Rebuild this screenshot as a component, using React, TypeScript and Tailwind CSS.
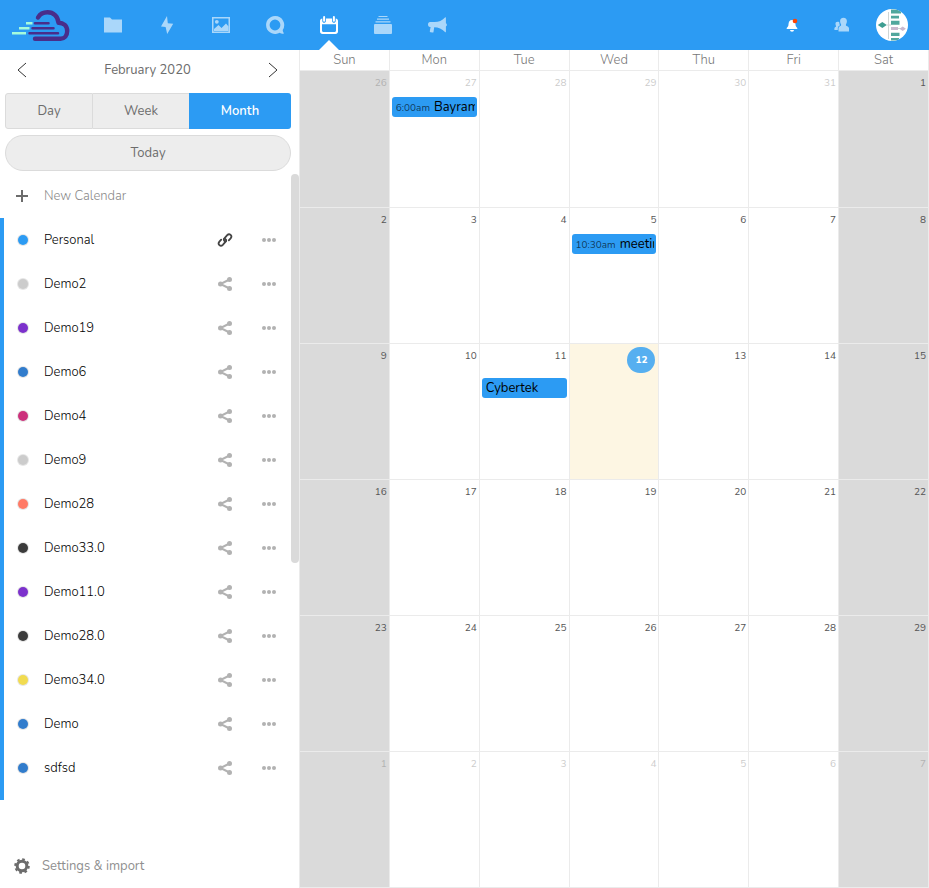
import React from "react";

type Day = { n: number; other?: boolean; today?: boolean; event?: { time?: string; title: string } };

const calendars = [
  { name: "Personal", dot: "bg-[#2c9bf3]", linked: true },
  { name: "Demo2", dot: "bg-[#cccccc]" },
  { name: "Demo19", dot: "bg-[#7c31cc]" },
  { name: "Demo6", dot: "bg-[#317ccc]" },
  { name: "Demo4", dot: "bg-[#cc317c]" },
  { name: "Demo9", dot: "bg-[#cccccc]" },
  { name: "Demo28", dot: "bg-[#ff7a66]" },
  { name: "Demo33.0", dot: "bg-[#3b3b3b]" },
  { name: "Demo11.0", dot: "bg-[#7c31cc]" },
  { name: "Demo28.0", dot: "bg-[#3b3b3b]" },
  { name: "Demo34.0", dot: "bg-[#f1db50]" },
  { name: "Demo", dot: "bg-[#317ccc]" },
  { name: "sdfsd", dot: "bg-[#317ccc]" },
];

const weekdays = ["Sun", "Mon", "Tue", "Wed", "Thu", "Fri", "Sat"];

const weeks: Day[][] = [
  [
    { n: 26, other: true },
    { n: 27, other: true, event: { time: "6:00am", title: "Bayram" } },
    { n: 28, other: true },
    { n: 29, other: true },
    { n: 30, other: true },
    { n: 31, other: true },
    { n: 1 },
  ],
  [{ n: 2 }, { n: 3 }, { n: 4 }, { n: 5, event: { time: "10:30am", title: "meeting" } }, { n: 6 }, { n: 7 }, { n: 8 }],
  [{ n: 9 }, { n: 10 }, { n: 11, event: { title: "Cybertek" } }, { n: 12, today: true }, { n: 13 }, { n: 14 }, { n: 15 }],
  [{ n: 16 }, { n: 17 }, { n: 18 }, { n: 19 }, { n: 20 }, { n: 21 }, { n: 22 }],
  [{ n: 23 }, { n: 24 }, { n: 25 }, { n: 26 }, { n: 27 }, { n: 28 }, { n: 29 }],
  [
    { n: 1, other: true },
    { n: 2, other: true },
    { n: 3, other: true },
    { n: 4, other: true },
    { n: 5, other: true },
    { n: 6, other: true },
    { n: 7, other: true },
  ],
];

function Logo() {
  return (
    <svg width="60" height="34" viewBox="0 0 60 34" fill="none" aria-hidden="true">
      <g stroke="#492d8a" strokeLinecap="round" strokeLinejoin="round">
        <path
          d="M27 9.500C29 6 32.500 4.300 36.500 4.300C42.500 4.300 47 8.500 47.500 14.700C52.500 14.700 56.200 18 56.200 23C56.200 27.500 53.500 30.700 49.500 30.700H24"
          strokeWidth="4.400"
        />
        <path d="M24 15.200H37.500M21.500 20.200H42.500M18.500 25.200H47" strokeWidth="2.500" />
      </g>
      <path d="M15 15.200H21.500M8 20.200H18.500M1 25.200H15" stroke="#a5fbdc" strokeWidth="2.500" />
    </svg>
  );
}

const apps: { label: string; active?: boolean; icon: React.ReactNode }[] = [
  { label: "Files", icon: <path d="M0 1.500h6l2 2h10v13H0z" /> },
  { label: "Activity", icon: <path d="M9 0L3 10.500l4.600.5L9.200 18 15.200 7.800l-5.400-.6z" /> },
  {
    label: "Gallery",
    icon: (
      <>
        <path fillRule="evenodd" d="M0 1h18v16H0zM1.500 2.500v13h15v-13z" />
        <circle cx="4.800" cy="5.800" r="1.900" />
        <path d="M2 15v-2L6.500 9l3 3L14 7.500l2.500 3V15z" />
      </>
    ),
  },
  {
    label: "Talk",
    icon: (
      <path
        fillRule="evenodd"
        d="M9 0a9 9 0 1 0 4.700 16.700c1 .8 2.600 1.200 3.700 1.100.5-.1.600-.4.300-.8-.6-.8-1-2-1-3A9 9 0 0 0 9 0zm0 3.600a5.400 5.400 0 1 1 0 10.800A5.400 5.400 0 0 1 9 3.600z"
      />
    ),
  },
  {
    label: "Calendar",
    active: true,
    icon: (
      <>
        <path
          fillRule="evenodd"
          d="M2.300 2.500V5c0 1 .8 1.800 1.800 1.800S5.900 6 5.900 5V2.500h6.200V5c0 1 .8 1.800 1.800 1.800s1.800-.8 1.800-1.800V2.500C17 2.600 18 3.600 18 5v10.500c0 1.500-1 2.500-2.500 2.500h-13C1 18 0 17 0 15.500V5c0-1.400 1-2.400 2.300-2.500zM2 8.300V14.500c0 .9.600 1.500 1.500 1.500h11c.9 0 1.500-.6 1.500-1.500V8.300z"
        />
        <rect x="3.100" y="0" width="2" height="5.800" rx="1" />
        <rect x="12.900" y="0" width="2" height="5.800" rx="1" />
      </>
    ),
  },
  {
    label: "Deck",
    icon: (
      <>
        <path d="M4.500 0h9v1h-9zM3 2.500h12v1.300H3zM1.500 5.200h15v1.300h-15z" />
        <rect y="8" width="18" height="10" rx="1" />
      </>
    ),
  },
  {
    label: "Announcements",
    icon: (
      <path d="M17 1.500C14 4.500 11 6 6.500 6H2C.8 6 0 7 0 8.500S.8 11 2 11h.6L1.800 15.300c-.1.500.1.800.6.900l2.200.3c.5.100.8-.2.900-.6L6.200 11.200C10.500 11.200 14 13 17 16c.4.400.9.300.9-.3V10.400c.7-.3 1-.9 1-1.500s-.3-1.300-1-1.600V1.800c0-.6-.5-.7-.9-.3z" />
    ),
  },
];

function Avatar() {
  return (
    <svg width="32" height="32" viewBox="0 0 32 32" className="rounded-full" aria-hidden="true">
      <rect width="32" height="32" fill="#fff" />
      <path d="M12.500 3v27M11 16h4M21 19.500h4" stroke="#cfd6d5" strokeWidth="1" />
      <path d="M15 .5h10v4H15zM15 6.700h8v2.800h-8zM15 11.700h8.500v4H15zM15 23.700h8.500V27H15zM15 29h8v2.500h-8z" fill="#50a79d" />
      <path d="M1.800 16l4.500-3 4.500 3-4.500 3z" fill="#3e9e92" />
      <path d="M15 18h7v3h-7zM23.500 19.700l3.200-2.200 3.200 2.200-3.200 2.200z" fill="#c9b9cf" />
    </svg>
  );
}

function TopBar() {
  return (
    <header className="flex h-[50px] shrink-0 items-center bg-[#2c9bf3] pr-3">
      <a href="#home" aria-label="Home" className="flex w-[86px] items-center pl-[11px]">
        <Logo />
      </a>
      <nav className="flex h-full flex-1">
        {apps.map((app) => (
          <a
            key={app.label}
            href={"#" + app.label.toLowerCase()}
            aria-label={app.label}
            className="relative flex w-[54px] items-center justify-center"
          >
            <svg
              width="18"
              height="18"
              viewBox="0 0 18 18"
              fill="#fff"
              className={app.active ? "overflow-visible" : "overflow-visible opacity-60"}
            >
              {app.icon}
            </svg>
            {app.active && (
              <svg width="20" height="10" viewBox="0 0 20 10" className="absolute bottom-0" aria-hidden="true">
                <path d="M0 10L10 0l10 10z" fill="#fff" />
              </svg>
            )}
          </a>
        ))}
      </nav>
      <button aria-label="Notifications" className="flex size-[50px] items-center justify-center">
        <svg width="14" height="14" viewBox="0 0 14 14">
          <path
            d="M7 2C4.500 2 3.600 4 3.500 6.300 3.400 8.600 2.700 9 1.700 10V11h10.600v-1c-1-1-1.700-1.400-1.800-3.700C10.400 4 9.500 2 7 2zM5 12a2 1.800 0 0 0 4 0z"
            fill="#fff"
          />
          <circle cx="10" cy="3" r="2.300" fill="#ff4402" />
        </svg>
      </button>
      <button aria-label="Contacts" className="flex size-[50px] items-center justify-center opacity-60">
        <svg width="16" height="16" viewBox="0 0 16 16" fill="#fff">
          <path d="M9.500.8C7.300.8 6 2.200 6.100 4.200c0 1.300.4 2.300.9 3 .2.500.1 1.300-.2 1.600-1.200.6-2.300 1.200-2.300 2.500V14.500h10.500v-3.200c0-1.300-1.400-1.900-2.800-2.500-.3-.3-.4-1.100-.2-1.600.5-.7.900-1.700.9-3C12.900 2.200 11.700.8 9.500.8z" />
          <path d="M3.600 4.800c-1.400 0-2.200.9-2.100 2.200 0 .8.200 1.400.5 1.900.1.300.1.700-.1.900-.8.400-1.500.8-1.500 1.700V13h3.400v-1.700c0-1.300.6-2.300 2.200-3.100-.5-.8-.7-1.800-.7-3C4.800 4.900 4.300 4.800 3.600 4.800z" />
        </svg>
      </button>
      <button aria-label="Account menu" className="flex size-[50px] items-center justify-center">
        <Avatar />
      </button>
    </header>
  );
}

function Chevron({ flip }: { flip?: boolean }) {
  return (
    <svg width="10" height="16" viewBox="0 0 10 16" fill="none" stroke="#333" strokeWidth="1">
      <path d={flip ? "M1 1l8 7-8 7" : "M9 1L1 8l8 7"} />
    </svg>
  );
}

function ShareIcon() {
  return (
    <svg width="14" height="14" viewBox="0 0 14 14" fill="#b2b2b2">
      <path d="M11.500 2.500L2.500 7l9 4.500" fill="none" stroke="#b2b2b2" strokeWidth="2" />
      <circle cx="2.500" cy="7" r="2.500" />
      <circle cx="11.500" cy="2.500" r="2.500" />
      <circle cx="11.500" cy="11.500" r="2.500" />
    </svg>
  );
}

function LinkIcon() {
  return (
    <svg width="16" height="16" viewBox="0 0 16 16" fill="none" stroke="#444" strokeWidth="1.800" strokeLinecap="round">
      <path d="M8.800 9.400C7 9.200 6.300 7.600 7.400 6.400L10.200 3.200c1.100-1.200 2.500-1.100 3.400-.3s1 2.200 0 3.400L11.800 8.300" />
      <path d="M7.200 6.600c1.800.2 2.500 1.800 1.400 3L5.800 12.800c-1.100 1.200-2.500 1.100-3.400.3s-1-2.200 0-3.400L4.200 7.700" />
    </svg>
  );
}

function Sidebar() {
  return (
    <aside className="flex w-[300px] shrink-0 flex-col border-r border-[#ebebeb] bg-white text-[13px] leading-5 font-light">
      <div className="flex h-10 shrink-0 items-center justify-between pr-1">
        <button aria-label="Previous month" className="flex h-10 w-11 items-center justify-center">
          <Chevron />
        </button>
        <button className="font-normal text-[#6c6c6c]">February 2020</button>
        <button aria-label="Next month" className="flex h-10 w-11 items-center justify-center">
          <Chevron flip />
        </button>
      </div>
      <div className="mt-[3px] mr-2 ml-[5px] flex h-9 shrink-0 font-normal text-[#6c6c6c]">
        <button className="w-[88px] rounded-l-[3px] border border-[#dbdbdb] bg-[#ededed]">Day</button>
        <button className="w-24 border-y border-[#dbdbdb] bg-[#ededed]">Week</button>
        <button className="flex-1 rounded-r-[3px] bg-[#2c9bf3] font-semibold text-white">Month</button>
      </div>
      <button className="mt-1.5 mr-2 ml-[5px] h-9 shrink-0 rounded-full border border-[#dbdbdb] bg-[#ededed] font-normal text-[#6c6c6c]">
        Today
      </button>
      <div className="mt-[3px] flex min-h-0 flex-1">
        <div className="flex min-w-0 flex-1 flex-col">
          <button className="flex h-11 shrink-0 items-center text-left text-[#8a8a8a]">
            <span className="flex w-11 justify-center">
              <svg width="12" height="12" viewBox="0 0 12 12" fill="#6c6c6c">
                <path d="M5 0h2v5h5v2H7v5H5V7H0V5h5z" />
              </svg>
            </span>
            New Calendar
          </button>
          <ul className="shrink-0 border-l-4 border-[#2c9bf3] pb-2.5">
            {calendars.map((c) => (
              <li key={c.name} className="flex h-11 items-center">
                <button className="flex h-full flex-1 items-center text-left text-black">
                  <span className="flex w-10 pl-[14px]">
                    <span className={"size-[10px] rounded-full ring-1 ring-black/10 " + c.dot} />
                  </span>
                  {c.name}
                </button>
                <button aria-label={"Share " + c.name} className="flex h-11 w-11 items-center justify-center">
                  {c.linked ? <LinkIcon /> : <ShareIcon />}
                </button>
                <button aria-label={"More for " + c.name} className="flex h-11 w-11 items-center justify-center">
                  <svg width="14" height="4" viewBox="0 0 14 4" fill="#b2b2b2">
                    <circle cx="2" cy="2" r="2" />
                    <circle cx="7" cy="2" r="2" />
                    <circle cx="12" cy="2" r="2" />
                  </svg>
                </button>
              </li>
            ))}
          </ul>
        </div>
        <div className="w-2 shrink-0">
          <div className="h-[58%] rounded bg-[#dadada]" />
        </div>
      </div>
      <button className="flex h-11 shrink-0 items-center text-left font-normal text-[#8f8f8f]">
        <span className="flex w-[42px] justify-center pl-0.5">
          <svg width="16" height="16" viewBox="0 0 16 16" fill="none" stroke="#6c6c6c">
            <circle cx="8" cy="8" r="4.800" strokeWidth="3" />
            <circle cx="8" cy="8" r="6.800" strokeWidth="2" strokeDasharray="2.670 2.670" />
          </svg>
        </span>
        Settings &amp; import
      </button>
    </aside>
  );
}

function DayCell({ day, index, tall }: { day: Day; index: number; tall: boolean }) {
  const bg = day.today ? "bg-[#fdf6e3]" : index === 0 || index === 6 ? "bg-[#dadada]" : "bg-white";
  const color = day.other ? "text-[#555] opacity-30" : "text-[#555]";
  return (
    <td className={"border-r border-b border-[#ebebeb] p-0 align-top " + bg}>
      <div className={"flex justify-end " + (tall ? "h-[34px]" : "h-[26px]")}>
        {day.today ? (
          <span className="mt-[3px] mr-[3px] flex h-[26px] w-7 items-center justify-center rounded-full bg-[#56aff0] text-[10px] font-extrabold text-white">
            {day.n}
          </span>
        ) : (
          <span className={"pr-0.5 text-[10px] leading-6 " + color}>{day.n}</span>
        )}
      </div>
      {day.event && (
        <a
          href="#event"
          className="mx-0.5 block h-5 overflow-hidden rounded-[3px] bg-[#2c9bf3] pr-0.5 pl-1 leading-5 whitespace-nowrap text-black"
        >
          <span className="block overflow-hidden text-[13px]">
            {day.event.time && <span className="mr-1 text-[10px] text-black/65">{day.event.time}</span>}
            {day.event.title}
          </span>
        </a>
      )}
    </td>
  );
}

export default function App() {
  return (
    <div className="flex h-screen flex-col overflow-hidden bg-white font-['Nunito','Lato',sans-serif]">
      <TopBar />
      <div className="flex min-h-0 flex-1">
        <Sidebar />
        <main className="min-w-0 flex-1">
          <table className="h-full w-full table-fixed border-separate border-spacing-0">
            <thead>
              <tr className="h-[21px]">
                {weekdays.map((d) => (
                  <th
                    key={d}
                    scope="col"
                    className="h-[21px] border-r border-b border-[#ebebeb] p-0 text-[13px] leading-5 font-light text-[#777]"
                  >
                    {d}
                  </th>
                ))}
              </tr>
            </thead>
            <tbody>
              {weeks.map((week, w) => (
                <tr key={w} className={w === 0 ? "h-[137px]" : "h-[136px]"}>
                  {week.map((day, i) => (
                    <DayCell key={i} day={day} index={i} tall={week.some((x) => x.today)} />
                  ))}
                </tr>
              ))}
            </tbody>
          </table>
        </main>
      </div>
    </div>
  );
}
